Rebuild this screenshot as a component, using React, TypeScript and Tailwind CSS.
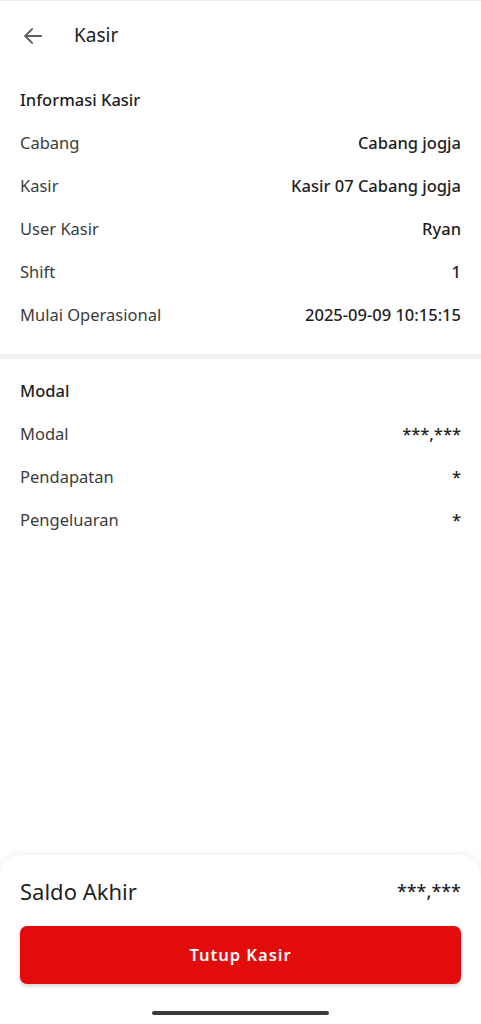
import React from 'react';

const infoRows = [
  { label: 'Cabang', value: 'Cabang jogja' },
  { label: 'Kasir', value: 'Kasir 07 Cabang jogja' },
  { label: 'User Kasir', value: 'Ryan' },
  { label: 'Shift', value: '1' },
  { label: 'Mulai Operasional', value: '2025-09-09 10:15:15' },
];

const modalRows = [
  { label: 'Modal', value: '***,***' },
  { label: 'Pendapatan', value: '*' },
  { label: 'Pengeluaran', value: '*' },
];

const Row = ({ label, value }: { label: string; value: string }) => (
  <div className="flex h-[43px] items-center justify-between pt-[2px]">
    <span className="text-[16.5px] text-[#3c3c3c]">{label}</span>
    <span className="text-[16.5px] font-medium text-[#1f1f1f]">{value}</span>
  </div>
);

export default function App() {
  return (
    <div
      className="flex h-[1024px] w-[481px] flex-col overflow-hidden border-t border-[#ececec] bg-white"
      style={{ fontFamily: '"Noto Sans", "Open Sans", sans-serif' }}
    >
      {/* header */}
      <div className="flex h-[69px] items-center px-[22px]">
        <svg width="22" height="22" viewBox="0 0 24 24" fill="none" stroke="#5f5f5f" strokeWidth="2.2" strokeLinecap="round" strokeLinejoin="round">
          <path d="M21 12H4" />
          <path d="M11 4.5L3.5 12l7.5 7.5" />
        </svg>
        <span className="ml-[30px] text-[19px] text-[#222]">Kasir</span>
      </div>

      <div className="flex-1">
        <section className="px-5 pb-[18px] pt-[8px]">
          <div className="flex h-[43px] items-center pt-[2px] text-[16.5px] font-medium text-[#1f1f1f]">Informasi Kasir</div>
          {infoRows.map((r) => (
            <Row key={r.label} label={r.label} value={r.value} />
          ))}
        </section>

        <div className="h-[5px] bg-[#f3f3f3]" />

        <section className="px-5 pt-[10px]">
          <div className="flex h-[43px] items-center pt-[2px] text-[16.5px] font-medium text-[#1f1f1f]">Modal</div>
          {modalRows.map((r) => (
            <Row key={r.label} label={r.label} value={r.value} />
          ))}
        </section>
      </div>

      {/* bottom sheet */}
      <div className="rounded-t-[22px] bg-white px-5 pt-[20px] shadow-[0_-2px_10px_rgba(0,0,0,0.06)]">
        <div className="flex h-[32px] items-center justify-between">
          <span className="text-[22px] text-[#1f1f1f]">Saldo Akhir</span>
          <span className="text-[18px] font-medium text-[#1f1f1f]">***,***</span>
        </div>
        <button className="mt-[19px] flex h-[58px] w-full items-center justify-center rounded-[7px] bg-[#e20c0c] text-[16.5px] font-semibold tracking-[1px] text-white shadow-[0_2px_4px_rgba(0,0,0,0.18)]">
          Tutup Kasir
        </button>
        <div className="flex h-[40px] items-start justify-center pt-[27px]">
          <div className="h-[4px] w-[177px] rounded-full bg-[#3a3a3a]" />
        </div>
      </div>
    </div>
  );
}
